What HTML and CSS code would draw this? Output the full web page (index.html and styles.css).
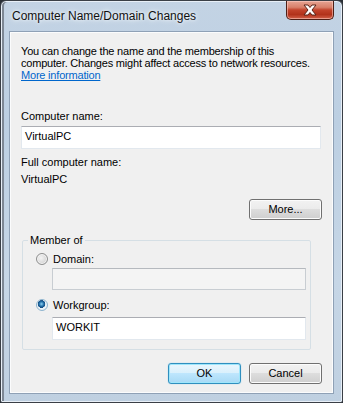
FILE: index.html
```html
<!DOCTYPE html>
<html>
<head>
<meta charset="utf-8">
<link rel="stylesheet" href="styles.css">
</head>
<body>
<div class="window">
  <div class="titlebar">
    <div class="title">Computer Name/Domain Changes</div>
    <div class="close">
      <svg width="16" height="12" viewBox="0 0 16 12">
        <path d="M2 1 L6 1 L8 3.5 L10 1 L14 1 L10 6 L14 11 L10 11 L8 8.5 L6 11 L2 11 L6 6 Z" fill="#fff" stroke="#5a2418" stroke-width="1" stroke-linejoin="round"/>
      </svg>
    </div>
  </div>
  <div class="panel">
    <p class="intro">You can change the name and the membership of this<br>computer. Changes might affect access to network resources.<br><span class="link">More information</span></p>
    <div class="label label-name">Computer name:</div>
    <div class="field field-name">VirtualPC</div>
    <div class="label label-full">Full computer name:</div>
    <div class="label label-value">VirtualPC</div>
    <div class="row-more"><div class="btn">More...</div></div>
    <fieldset class="group">
      <legend class="legend">Member of</legend>
      <div class="radio-row radio-domain"><span class="radio"></span><span>Domain:</span></div>
      <div class="field field-sub field-disabled"></div>
      <div class="radio-row radio-work"><span class="radio radio-on"></span><span>Workgroup:</span></div>
      <div class="field field-sub field-work">WORKIT</div>
    </fieldset>
    <div class="actions">
      <div class="btn btn-default">OK</div>
      <div class="btn">Cancel</div>
    </div>
  </div>
</div>
</body>
</html>
```

FILE: styles.css
```css
html, body {
  margin: 0;
  padding: 0;
  background: #2a2f36;
}
body {
  width: 343px;
  height: 403px;
  overflow: hidden;
  font-family: "Liberation Sans", Arial, sans-serif;
  font-size: 11px;
  color: #000;
}
.window {
  width: 343px;
  height: 403px;
  box-sizing: border-box;
  border: 1px solid #3a3f46;
  border-radius: 6px 6px 2px 2px;
  background: linear-gradient(180deg, #c3d3e4 0%, #bccfe2 30%, #c6d6e6 70%, #bfd0e1 100%);
  box-shadow: inset 0 0 0 1px #e8eff7, inset 2px 0 0 1px #7d8794;
  display: flex;
  flex-direction: column;
}
.titlebar {
  height: 30px;
  display: flex;
  align-items: flex-start;
  flex-shrink: 0;
}
.title {
  flex: 1;
  padding-left: 11px;
  padding-top: 9px;
  font-size: 12px;
  line-height: 13px;
  color: #111;
  text-shadow: 0 0 6px #f4f8fc, 0 0 3px #f4f8fc;
}
.close {
  width: 48px;
  height: 19px;
  margin-right: 8px;
  box-sizing: border-box;
  border: 1px solid #4e1f16;
  border-top: none;
  border-radius: 0 0 5px 5px;
  background: linear-gradient(180deg, #e6a493 0%, #d8806a 35%, #c2432b 50%, #b2321b 75%, #d2614a 100%);
  box-shadow: inset 0 0 0 1px rgba(255, 210, 200, 0.55);
  display: flex;
  align-items: center;
  justify-content: center;
}
.panel {
  flex: 1;
  margin: 0 8px 8px 8px;
  border: 1px solid #8fa1b6;
  background: #f0f0f0;
  box-shadow: inset 0 0 0 1px #fbfcfd;
  padding: 13px 10px 0 11px;
  display: flex;
  flex-direction: column;
}
.intro {
  margin: 0;
  line-height: 12px;
  white-space: nowrap;
  letter-spacing: -0.2px;
}
.link {
  color: #0066cc;
  text-decoration: underline;
}
.label {
  line-height: 12px;
}
.label-name { margin-top: 29px; }
.label-full { margin-top: 7px; }
.label-value { margin-top: 5px; }
.field {
  box-sizing: border-box;
  height: 23px;
  border: 1px solid #e2e8ee;
  border-top-color: #abadb3;
  background: #fff;
  padding: 1px 3px 0 3px;
  line-height: 17px;
}
.field-name {
  margin-top: 4px;
  width: 300px;
}
.row-more {
  display: flex;
  justify-content: flex-end;
  margin-top: 14px;
  padding-right: 1px;
}
.btn {
  box-sizing: border-box;
  width: 73px;
  height: 21px;
  border: 1px solid #707070;
  border-radius: 3px;
  background: linear-gradient(180deg, #f2f2f2 0%, #ebebeb 49%, #dddddd 50%, #cfcfcf 100%);
  box-shadow: inset 0 0 0 1px #fcfcfc;
  text-align: center;
  line-height: 19px;
}
.btn-default {
  border-color: #2f8fbf;
  background: linear-gradient(180deg, #eaf6fd 0%, #d9f0fc 49%, #bee6fd 50%, #a7d9f5 100%);
  box-shadow: inset 0 0 0 1px #9fe6fb, 0 0 1px #67c2ea;
}
.group {
  margin: 14px 12px 0 1px;
  padding: 0 0 9px 12px;
  border: 1px solid #d5dfe5;
  border-radius: 2px;
  min-width: 0;
}
.legend {
  margin-left: -7px;
  padding: 0 2px;
  line-height: 12px;
}
.radio-row {
  display: flex;
  align-items: center;
  line-height: 12px;
  gap: 5px;
}
.radio-domain { margin-top: 7px; }
.radio-work { margin-top: 9px; }
.radio {
  width: 12px;
  height: 12px;
  margin-left: 1px;
  box-sizing: border-box;
  border-radius: 50%;
  border: 1px solid #8e8f8f;
  background: radial-gradient(circle at 40% 40%, #f4f4f4 0%, #d9d9d9 60%, #c4c4c4 100%);
  box-shadow: inset 0 0 0 1px #f6f6f6;
}
.radio-on {
  border-color: #8eb4ce;
  background: radial-gradient(circle at 45% 40%, #8cd0f2 0%, #1f6ba4 30%, #174c80 45%, #f2f6f9 50%, #dbe6ee 100%);
  box-shadow: none;
}
.field-sub {
  width: 254px;
  margin-left: 17px;
}
.field-disabled {
  margin-top: 3px;
  height: 22px;
  background: #f4f4f4;
  border-color: #c8cdd2;
  border-top-color: #b5b9be;
}
.field-work {
  margin-top: 6px;
}
.actions {
  display: flex;
  justify-content: flex-end;
  gap: 8px;
  margin-top: 13px;
  padding-right: 1px;
}
```
